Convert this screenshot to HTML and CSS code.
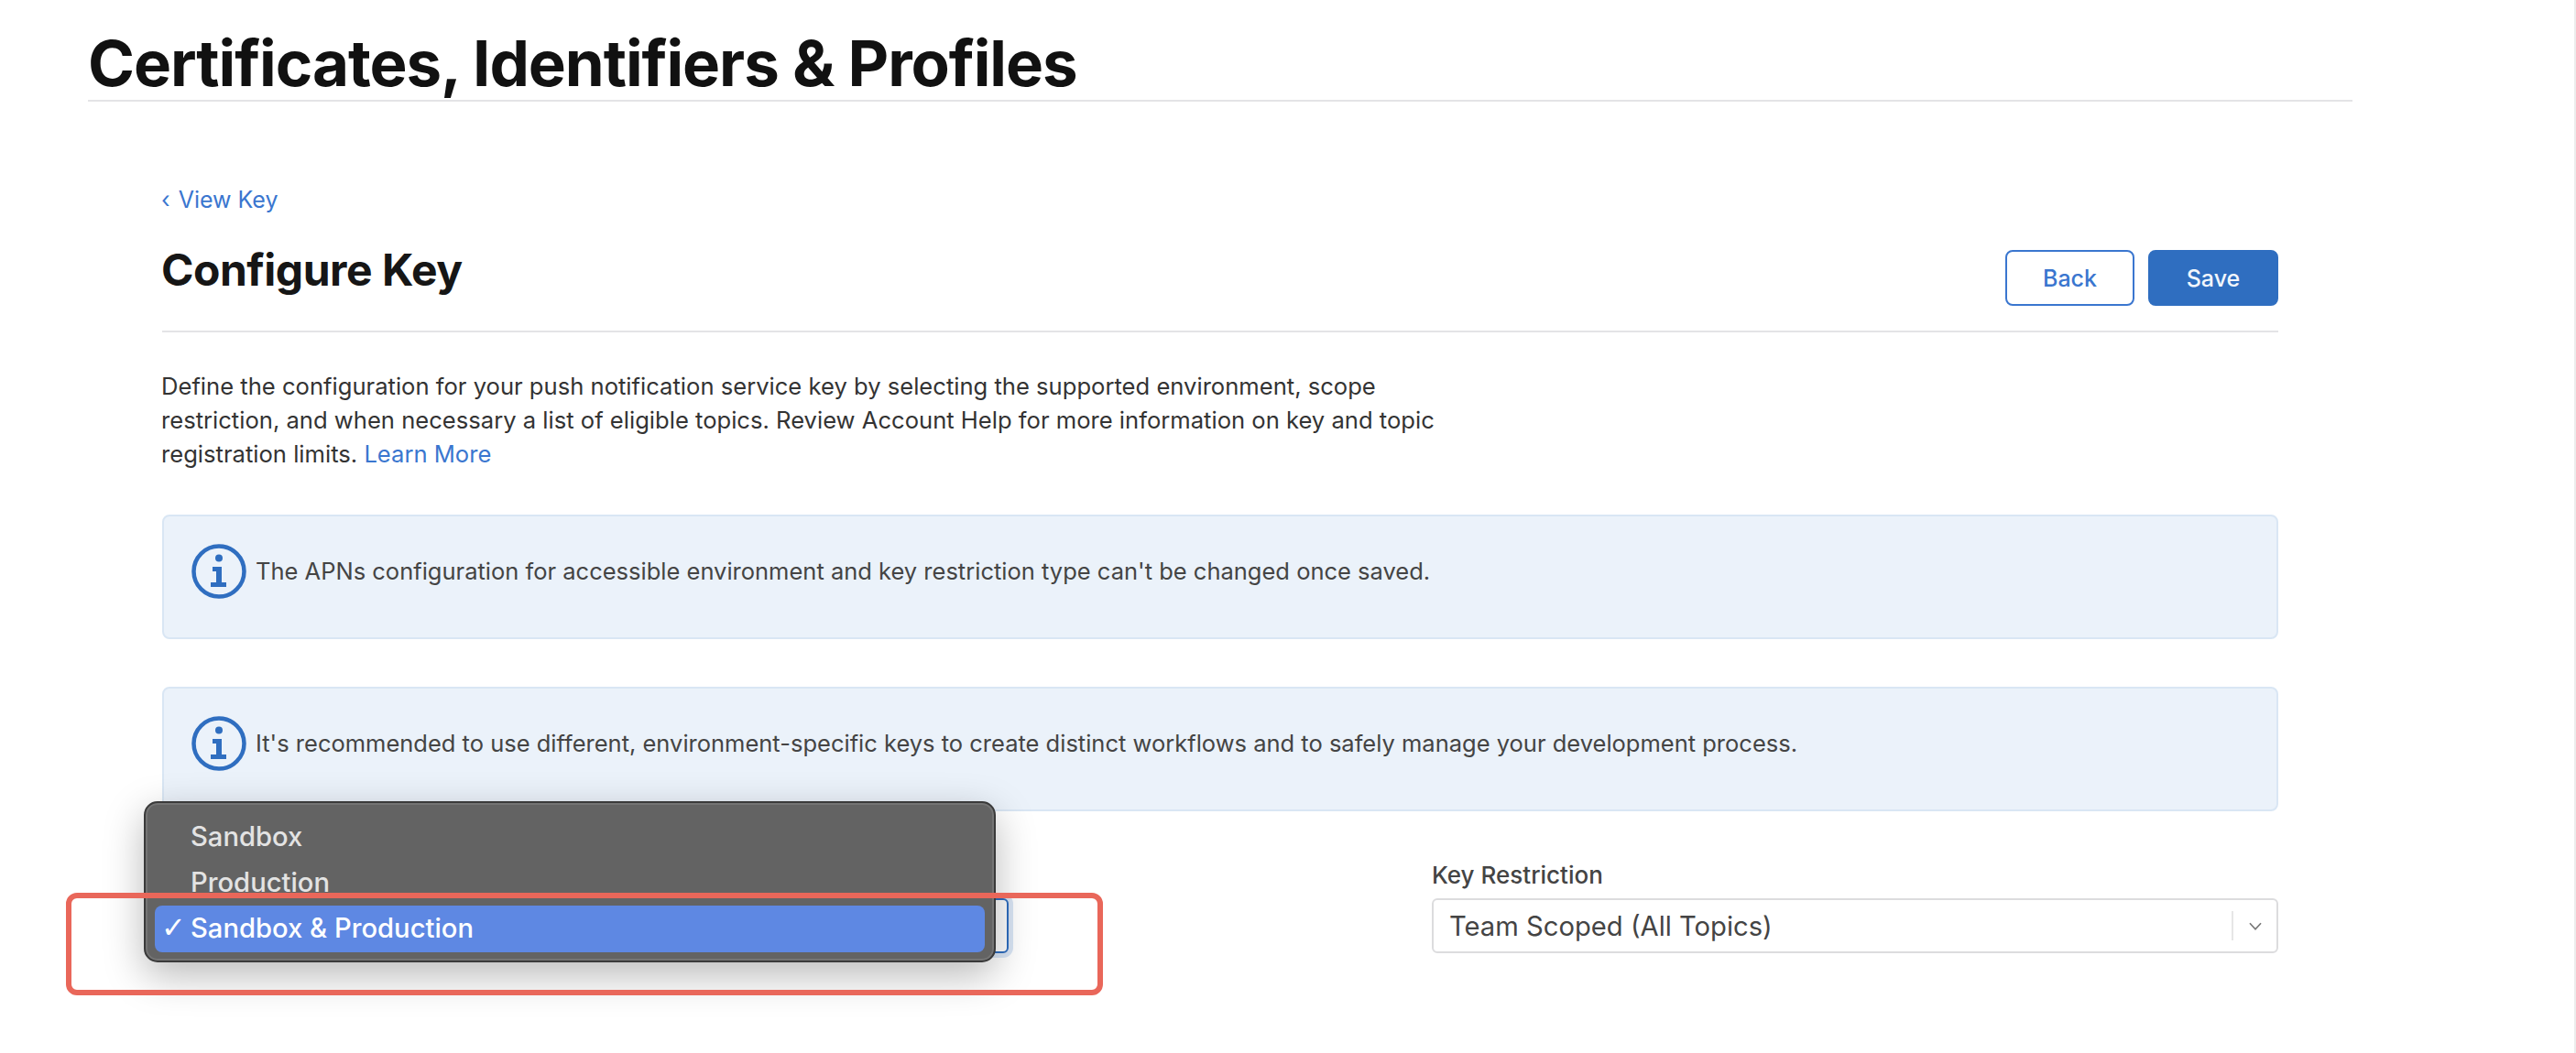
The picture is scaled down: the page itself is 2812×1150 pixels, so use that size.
FILE: index.html
```html
<!DOCTYPE html>
<html lang="en">
<head>
<meta charset="utf-8">
<title>Configure Key</title>
<link rel="stylesheet" href="styles.css">
</head>
<body>
<div class="page">
  <header class="site-head"><h1>Certificates, Identifiers &amp; Profiles</h1></header>
  <main class="content">
    <a class="back-link" href="#"><span class="caret">‹</span> View Key</a>
    <div class="title-row">
      <h2>Configure Key</h2>
      <div class="actions">
        <button class="btn btn-outline">Back</button>
        <button class="btn btn-solid">Save</button>
      </div>
    </div>
    <p class="intro">Define the configuration for your push notification service key by selecting the supported environment, scope restriction, and when necessary a list of eligible topics. Review Account Help for more information on key and topic registration limits. <a href="#">Learn More</a></p>
    <div class="notice">
      <svg class="info" viewBox="0 0 60 60"><circle cx="30" cy="30" r="27.5" fill="none" stroke="#2f6ec0" stroke-width="4.5"/><circle cx="30" cy="15.5" r="4" fill="#2f6ec0"/><path d="M23 25h10v17h5v5H21v-5h6V30h-4z" fill="#2f6ec0"/></svg>
      <span>The APNs configuration for accessible environment and key restriction type can't be changed once saved.</span>
    </div>
    <div class="notice">
      <svg class="info" viewBox="0 0 60 60"><circle cx="30" cy="30" r="27.5" fill="none" stroke="#2f6ec0" stroke-width="4.5"/><circle cx="30" cy="15.5" r="4" fill="#2f6ec0"/><path d="M23 25h10v17h5v5H21v-5h6V30h-4z" fill="#2f6ec0"/></svg>
      <span>It's recommended to use different, environment-specific keys to create distinct workflows and to safely manage your development process.</span>
    </div>
    <div class="form-row">
      <div class="field field-env">
        <label>Environment</label>
        <div class="select select-focus"><span>Sandbox &amp; Production</span></div>
        <div class="menu">
          <div class="menu-item">Sandbox</div>
          <div class="menu-item">Production</div>
          <div class="menu-item selected"><span class="check">✓</span>Sandbox &amp; Production</div>
        </div>
        <div class="highlight"></div>
      </div>
      <div class="field field-key">
        <label>Key Restriction</label>
        <div class="select">
          <span>Team Scoped (All Topics)</span>
          <span class="select-end"><svg class="chev" viewBox="0 0 14 10"><path d="M1.5 2l5.500 6 5.500-6" fill="none" stroke="#777" stroke-width="1.500"/></svg></span>
        </div>
      </div>
    </div>
  </main>
</div>
</body>
</html>
```

FILE: styles.css
```css
* { box-sizing: border-box; }
html, body { margin: 0; padding: 0; }
body {
  height: 1150px;
  overflow: hidden;
  background: #fff;
  color: #333;
  font-family: Inter, "Liberation Sans", sans-serif;
  border-right: 2px solid #ececec;
}
.page { padding-left: 96px; width: 2568px; }
.site-head { height: 111px; border-bottom: 2px solid #e4e4e6; }
.site-head h1 {
  margin: 0;
  padding-top: 29px;
  font-size: 69px;
  line-height: 80px;
  font-weight: 700;
  letter-spacing: -1.08px;
  color: #111;
}
.content { margin-left: 81px; width: 2310px; }
.back-link {
  display: block;
  margin: 92px 0 0 -1px;
  font-size: 25px;
  line-height: 30px;
  color: #3a76cf;
  text-decoration: none;
}
.caret { margin-right: 2px; }
.title-row {
  display: flex;
  justify-content: space-between;
  align-items: flex-start;
  margin-top: 40px;
  height: 90px;
  border-bottom: 2px solid #e4e4e6;
}
.title-row h2 {
  margin: 0 0 0 -1px;
  font-size: 48px;
  line-height: 44px;
  font-weight: 700;
  letter-spacing: -.5px;
  color: #161616;
}
.actions { display: flex; gap: 15px; }
.btn {
  width: 142px;
  height: 61px;
  border-radius: 8px;
  font-family: inherit;
  font-size: 25px;
  font-weight: 500;
  padding: 0;
}
.btn-outline { width: 141px; background: #fff; border: 2px solid #3a76cf; color: #3a76cf; }
.btn-solid { background: #2f6ec0; border: 2px solid #2f6ec0; color: #f2f6fc; }
.intro {
  margin: 40px 0 0 -1px;
  width: 1440px;
  font-size: 25.6px;
  line-height: 37px;
  color: #333;
}
.intro a { color: #3a76cf; text-decoration: none; }
.notice {
  display: flex;
  align-items: flex-start;
  gap: 10px;
  height: 136px;
  margin-top: 48px;
  padding: 30px 0 0 30px;
  background: #ebf2fa;
  border: 2px solid #d9e6f4;
  border-radius: 8px;
  font-size: 25.5px;
  line-height: 60px;
  color: #444;
}
.notice + .notice { margin-top: 52px; }
.info { width: 60px; height: 60px; flex: none; }
.form-row {
  display: flex;
  justify-content: space-between;
  margin-top: 59px;
}
.field { position: relative; }
.field-env { width: 924px; }
.field-key { width: 924px; }
.field label {
  display: block;
  height: 36px;
  font-size: 26px;
  line-height: 22px;
  font-weight: 500;
  color: #444;
}
.select {
  display: flex;
  align-items: center;
  justify-content: space-between;
  height: 60px;
  padding-left: 17px;
  background: #fff;
  border: 2px solid #dcdcde;
  border-radius: 6px;
  font-size: 29.2px;
  color: #444;
}
.select-focus { border-color: #2f6ec0; box-shadow: 0 0 0 5px #d9e5f5; }
.select-end {
  display: flex;
  align-items: center;
  justify-content: center;
  width: 49px;
  height: 32px;
  border-left: 2px solid #e6e6e6;
}
.chev { width: 16px; height: 11px; }
.menu {
  position: absolute;
  left: -20px;
  top: -70px;
  width: 930px;
  height: 176px;
  padding: 12px 10px 0;
  background: #636363;
  border: 2px solid #3a3a3a;
  box-shadow: inset 0 0 0 2px #747474, 0 14px 44px rgba(0,0,0,.28);
  border-radius: 15px;
}
.menu-item {
  height: 50px;
  padding-left: 39px;
  font-size: 29.2px;
  line-height: 50px;
  font-weight: 500;
  color: #e3e3e3;
  position: relative;
}
.menu-item.selected {
  height: 51px;
  border-radius: 8px;
  background: #5e88e3;
  color: #fff;
}
.check { position: absolute; left: 7px; top: -1px; font-size: 32px; font-family: "DejaVu Sans", sans-serif; }
.highlight {
  position: absolute;
  left: -105px;
  top: 30px;
  width: 1132px;
  height: 112px;
  border: 6px solid #e9675a;
  border-radius: 12px;
}
```
